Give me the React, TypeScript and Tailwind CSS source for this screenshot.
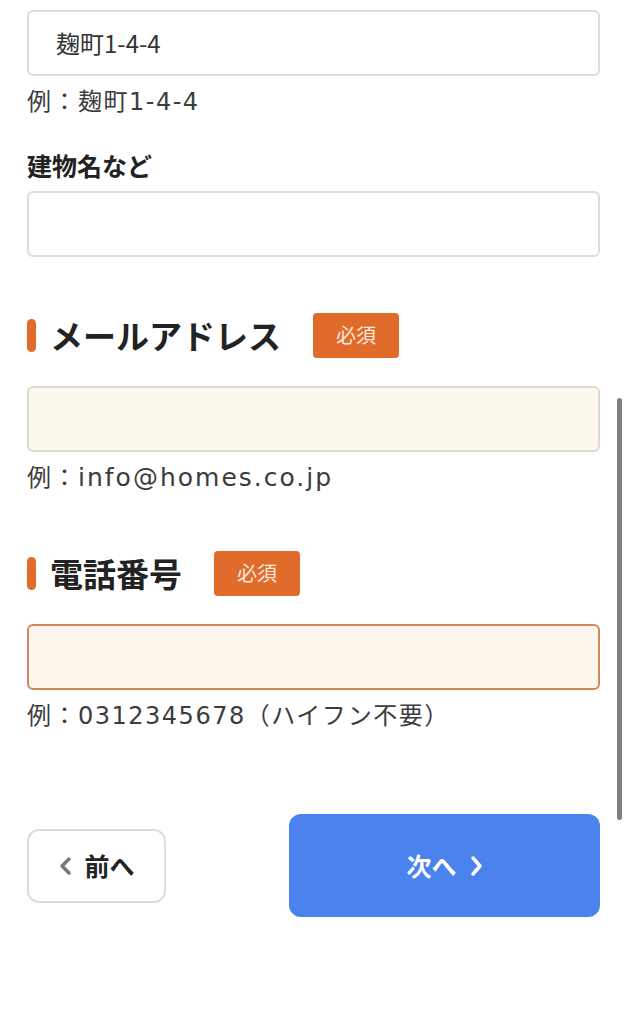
import React from "react";

const font = { fontFamily: '"Noto Sans CJK JP", "Noto Sans", sans-serif' };
const hintFont = { fontFamily: '"DejaVu Sans", "Noto Sans CJK JP", sans-serif' };

function Badge() {
  return (
    <span className="flex h-[45px] w-[86px] items-center justify-center rounded-[4px] bg-[#e06b2b] text-[20px] text-[#fde9dc]">
      必須
    </span>
  );
}

function Heading({ title }: { title: string }) {
  return (
    <div className="flex h-[46px] items-center">
      <span className="h-[33px] w-[9px] rounded-full bg-[#e06b2b]" />
      <span className="ml-[14px] text-[33px] font-bold leading-none text-[#222]">{title}</span>
      <span className="ml-[32px]">
        <Badge />
      </span>
    </div>
  );
}

function Hint({ children, className }: { children: React.ReactNode; className?: string }) {
  return (
    <div
      className={"h-[32px] whitespace-nowrap text-[24px] leading-[32px] tracking-[1.5px] text-[#3c3c3c] " + (className ?? "")}
      style={hintFont}
    >
      {children}
    </div>
  );
}

export default function App() {
  return (
    <div className="relative h-[1024px] w-[627px] overflow-hidden bg-white" style={font}>
      <div className="w-[627px] px-[27px] pt-[10px]">
        <div className="flex h-[66px] w-[573px] items-center rounded-[6px] border-2 border-[#dcdcdc] bg-white pl-[27px] text-[24px] text-[#333]">
          麹町1-4-4
        </div>
        <Hint className="mt-[10px]">例：麹町1-4-4</Hint>
        <div className="mt-[31px] h-[32px] text-[25px] font-bold leading-[32px] text-[#222]">建物名など</div>
        <div className="mt-[10px] h-[66px] w-[573px] rounded-[6px] border-2 border-[#dcdcdc] bg-white" />

        <div className="mt-[55px]">
          <Heading title="メールアドレス" />
        </div>
        <div className="mt-[28px] h-[66px] w-[573px] rounded-[6px] border-2 border-[#dedad2] bg-[#fcf8ee]" />
        <Hint className="mt-[10px]">
          例：<span className="text-[25px] tracking-[2px]">info@homes.co.jp</span>
        </Hint>

        <div className="mt-[56px]">
          <Heading title="電話番号" />
        </div>
        <div className="mt-[28px] h-[66px] w-[573px] rounded-[6px] border-2 border-[#d3875a] bg-[#fef7ee]" />
        <Hint className="mt-[10px]">例：0312345678（ハイフン不要）</Hint>

        <div className="mt-[82px] flex w-[573px] items-center justify-between">
          <button className="flex h-[74px] w-[139px] items-center justify-center gap-[12px] rounded-[12px] border-2 border-[#dcdcdc] bg-white">
            <svg width="14" height="20" viewBox="0 0 14 20">
              <path d="M11 3 L4 10 L11 17" fill="none" stroke="#777" strokeWidth="3.5" strokeLinecap="round" strokeLinejoin="round" />
            </svg>
            <span className="text-[25px] font-bold text-[#222]">前へ</span>
          </button>
          <button className="flex h-[103px] w-[311px] items-center justify-center gap-[12px] rounded-[12px] bg-[#4a82ee]">
            <span className="text-[25px] font-bold text-white">次へ</span>
            <svg width="14" height="22" viewBox="0 0 14 22">
              <path d="M4 3 L11 11 L4 19" fill="none" stroke="#fff" strokeWidth="3.5" strokeLinecap="round" strokeLinejoin="round" />
            </svg>
          </button>
        </div>
      </div>
      <div className="absolute left-[617px] top-[398px] h-[422px] w-[5px] rounded-full bg-[#7f7f7f]" />
    </div>
  );
}
